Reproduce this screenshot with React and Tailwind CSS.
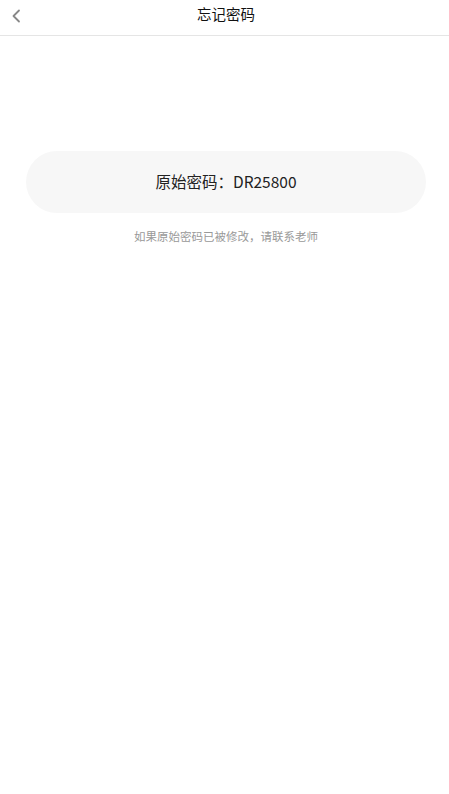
import React from "react";

const ForgotPassword = () => {
  return (
    <div
      className="min-h-screen bg-white"
      style={{ fontFamily: '"Noto Sans CJK SC", "Noto Sans", sans-serif' }}
    >
      {/* header */}
      <div className="relative flex items-center justify-center h-[36px] border-b border-[#e5e5e5]">
        <button className="absolute left-[9px] top-[7px] text-[#888]">
          <svg width="14" height="18" viewBox="0 0 14 18" fill="none">
            <path d="M10 3.5L4.5 9L10 14.5" stroke="currentColor" strokeWidth="1.8" strokeLinecap="round" strokeLinejoin="round" />
          </svg>
        </button>
        <h1 className="text-[14.5px] text-[#111] leading-none -mt-[6px] pl-[3px]">忘记密码</h1>
      </div>

      {/* content */}
      <div className="pl-[26px] pr-[23px] pt-[115px]">
        <div className="h-[62px] rounded-full bg-[#f7f7f7] flex items-center justify-center">
          <span className="text-[15.5px] text-[#222]">原始密码：DR25800</span>
        </div>
        <p className="mt-[15px] text-center text-[11.5px] text-[#999]">如果原始密码已被修改，请联系老师</p>
      </div>
    </div>
  );
};

export default ForgotPassword;
